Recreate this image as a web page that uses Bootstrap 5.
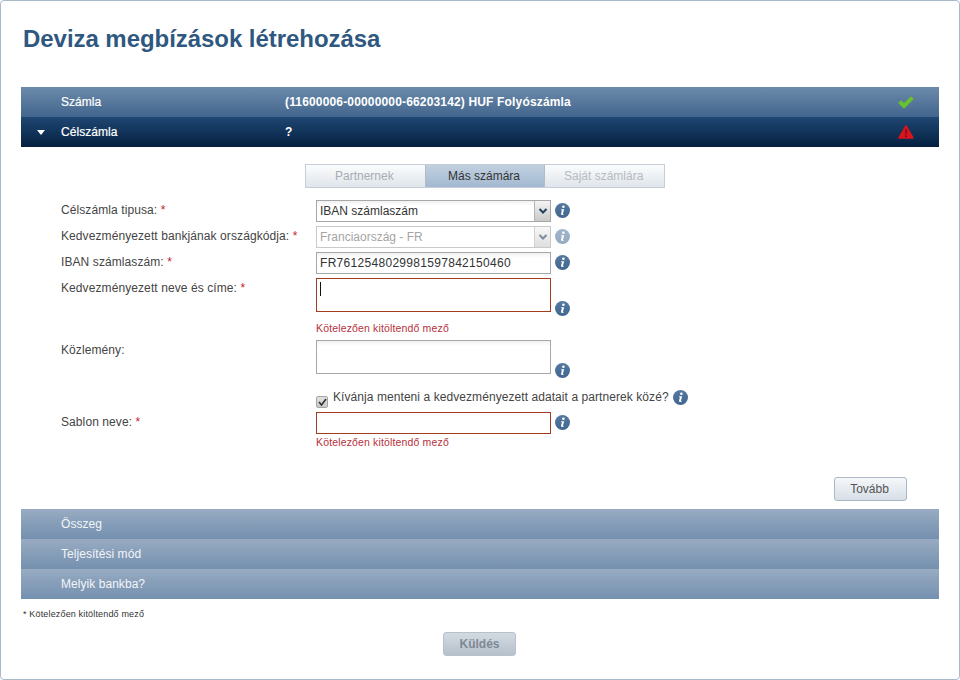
<!DOCTYPE html>
<html lang="hu">
<head>
<meta charset="utf-8">
<title>Deviza megbízások létrehozása</title>
<link href="https://cdn.jsdelivr.net/npm/bootstrap@5.3.0/dist/css/bootstrap.min.css" rel="stylesheet">
<style>
html,body{height:680px;overflow:hidden;background:#fff}
body{font-family:"Liberation Sans",Arial,sans-serif;font-size:12px;color:#444;line-height:14px}
.frame{height:680px;border:1px solid #a9b9cc;border-radius:4px;padding:0 20px;background:#fff}
.page-title{font-size:24px;line-height:28px;font-weight:700;color:#2f5880;margin:0;padding:24px 0 34px 2px;letter-spacing:-.05px}
.bar{height:30px;color:#fff;font-weight:400;display:flex;align-items:center;-webkit-text-stroke:.2px #fff;letter-spacing:.05px}
.bar-done{background:linear-gradient(#6c8bab,#42658d);}
.bar-open{background:linear-gradient(#1f4773,#04203f)}
.bar-later{background:linear-gradient(#98abc2,#7490af);color:#f2f5f8;-webkit-text-stroke:0}
.bar-caret{width:40px;display:flex;justify-content:center;padding-right:0}
.bar-name{width:224px}
.bar-value{flex:1;font-weight:700;-webkit-text-stroke:0;letter-spacing:.16px}
.bar-state{width:34px;display:flex;justify-content:center;margin-right:16px}
.tabs{width:360px;height:24px;margin:17px 0 12px 284px;display:flex;border:1px solid #c5ced8}
.tab-item{flex:1;display:flex;align-items:center;justify-content:center;padding-right:2px;color:#a9adb3;background:linear-gradient(#fbfcfd,#dfe5eb)}
.tab-item+.tab-item{border-left:1px solid #aebccb}
.tab-item.on{color:#333;background:linear-gradient(#c1d0e0,#a3b9d0)}
.tab-item.dim{color:#b7bbc0}
.form-row-x{display:flex;align-items:flex-start;margin-bottom:4px}
.lbl{width:255px;margin-left:40px;padding-top:3px;flex:none;color:#444;letter-spacing:.09px}
.req{color:#c8202c}
.fld{width:235px;height:22px;flex:none;border:1px solid #a7a7a7;background:linear-gradient(#f1f1f1,#fff 5px);padding:0 3px;font-size:12px;line-height:20px;color:#333;display:flex;align-items:center;justify-content:space-between}
.fld.dis{border-color:#c9c9c9;color:#a5a5a5;background:#fff}
.fld.tall{height:34px;align-items:flex-start}
.fld.bad{border-color:#a23c1e;background:#fff}
.mono-ish{letter-spacing:.3px}
.drop{width:16px;height:20px;margin-right:-3px;background:linear-gradient(#f4f4f4,#c9c9c9);border-left:1px solid #b5b5b5;display:flex;align-items:center;justify-content:center}
.dis .drop{opacity:.6}
.info{width:15px;height:15px;flex:none;margin-left:4px;margin-top:3px}
.info.low{margin-top:23px;margin-bottom:-4px}
.info.dim{opacity:.55}
.err{color:#b8303c;font-size:10.5px;line-height:12px;margin-left:295px;letter-spacing:.15px}
.err-a{margin-top:10px;margin-bottom:6px}
.err-b{margin-top:2px}
.caret-line{display:inline-block;width:1px;height:14px;background:#111;margin:3px 0 0 0}
.chk-row{margin:16px 0 4px 295px;display:flex;align-items:flex-start;height:18px;letter-spacing:.07px}
.box{width:12px;height:12px;border:1px solid #a5a5a5;border-radius:2px;background:linear-gradient(#e2e2e2,#c9c9c9);margin:6px 5px 0 0;flex:none;display:flex;align-items:center;justify-content:center}
.btn-x{width:73px;height:24px;border:1px solid #a9b7c6;border-radius:3px;background:linear-gradient(#f6f8fa,#d6dee6);color:#555;font-size:12px;padding:0 2px 0 0;line-height:22px;text-align:center}
.btn-x.off{background:linear-gradient(#d3dae1,#b6c1cc);color:#7e8893;font-weight:700;border-color:#b6c1cc;margin-right:1px;padding:0}
.next-wrap{display:flex;justify-content:flex-end;padding-right:32px;margin-top:29px;margin-bottom:8px}
.foot{font-size:9px;line-height:10px;color:#333;margin:10px 0 0 2px;letter-spacing:.16px}
.send-wrap{display:flex;justify-content:center;margin-top:13px}
</style>
</head>
<body>
<svg width="0" height="0" class="position-absolute">
<defs>
<linearGradient id="g-info" x1="0" y1="0" x2="0" y2="1"><stop offset="0" stop-color="#56799f"/><stop offset="1" stop-color="#3f6790"/></linearGradient>
<symbol id="i-info" viewBox="0 0 15 15">
<circle cx="7.5" cy="7.5" r="7.5" fill="url(#g-info)"/>
<circle cx="8.4" cy="3.8" r="1.3" fill="#fff"/>
<path d="M6.2 6.3h3l-1.3 4.4c-.1.4.3.4 1 .1l-.1.7c-1.3.6-3.1.6-2.8-.8l.9-3.4-.9-.2z" fill="#fff"/>
</symbol>
<symbol id="i-down" viewBox="0 0 10 8"><path d="M1.5 2 5 5.5 8.5 2" fill="none" stroke="#23405f" stroke-width="2"/></symbol>
</defs>
</svg>
<div class="frame">
<h1 class="page-title">Deviza megbízások létrehozása</h1>

<div class="bar bar-done">
<span class="bar-caret"></span><span class="bar-name">Számla</span>
<span class="bar-value">(11600006-00000000-66203142) HUF Folyószámla</span>
<span class="bar-state"><svg width="16" height="13" viewBox="0 0 16 13"><path d="M.5 7 3 4.5l3 2.8L13 .5 15.5 3 6 12.5z" fill="#68c22f" stroke="#68c22f" stroke-width=".5" stroke-linejoin="round"/></svg></span>
</div>
<div class="bar bar-open">
<span class="bar-caret"><svg width="8" height="5" viewBox="0 0 8 5"><path d="M0 0h8L4 5z" fill="#fff"/></svg></span><span class="bar-name">Célszámla</span>
<span class="bar-value">?</span>
<span class="bar-state"><svg width="16" height="14" viewBox="0 0 16 14"><path d="M8 1 15 13H1z" fill="#d8141f" stroke="#d8141f" stroke-width="1.6" stroke-linejoin="round"/><path d="M7.3 4.5h1.4l-.2 5h-1zM7.3 10.5h1.4v1.5H7.3z" fill="#5a0b10"/></svg></span>
</div>

<div class="tabs">
<div class="tab-item">Partnernek</div>
<div class="tab-item on">Más számára</div>
<div class="tab-item dim">Saját számlára</div>
</div>

<div class="form-row-x">
<div class="lbl">Célszámla tipusa: <span class="req">*</span></div>
<div class="fld"><span>IBAN számlaszám</span><span class="drop"><svg width="10" height="8"><use href="#i-down"/></svg></span></div>
<svg class="info"><use href="#i-info"/></svg>
</div>
<div class="form-row-x">
<div class="lbl">Kedvezményezett bankjának országkódja: <span class="req">*</span></div>
<div class="fld dis"><span>Franciaország - FR</span><span class="drop"><svg width="10" height="8"><use href="#i-down"/></svg></span></div>
<svg class="info dim"><use href="#i-info"/></svg>
</div>
<div class="form-row-x">
<div class="lbl">IBAN számlaszám: <span class="req">*</span></div>
<div class="fld"><span class="mono-ish">FR7612548029981597842150460</span></div>
<svg class="info"><use href="#i-info"/></svg>
</div>
<div class="form-row-x mb-0">
<div class="lbl">Kedvezményezett neve és címe: <span class="req">*</span></div>
<div class="fld tall bad"><span class="caret-line"></span></div>
<svg class="info low"><use href="#i-info"/></svg>
</div>
<div class="err err-a">Kötelezően kitöltendő mező</div>
<div class="form-row-x mb-0">
<div class="lbl">Közlemény:</div>
<div class="fld tall"></div>
<svg class="info low"><use href="#i-info"/></svg>
</div>
<div class="chk-row">
<span class="box"><svg width="9" height="8" viewBox="0 0 9 8"><path d="M1 4l2.5 3L8 1" fill="none" stroke="#333" stroke-width="1.6"/></svg></span>
<span>Kívánja menteni a kedvezményezett adatait a partnerek közé?</span>
<svg class="info mt-0"><use href="#i-info"/></svg>
</div>
<div class="form-row-x mb-0">
<div class="lbl">Sablon neve: <span class="req">*</span></div>
<div class="fld bad"></div>
<svg class="info"><use href="#i-info"/></svg>
</div>
<div class="err err-b">Kötelezően kitöltendő mező</div>

<div class="next-wrap"><button type="button" class="btn-x">Tovább</button></div>

<div class="bar bar-later"><span class="bar-caret"></span><span class="bar-name">Összeg</span></div>
<div class="bar bar-later"><span class="bar-caret"></span><span class="bar-name">Teljesítési mód</span></div>
<div class="bar bar-later"><span class="bar-caret"></span><span class="bar-name">Melyik bankba?</span></div>

<div class="foot">* Kötelezően kitöltendő mező</div>
<div class="send-wrap"><button type="button" class="btn-x off">Küldés</button></div>
</div>
<script src="https://cdn.jsdelivr.net/npm/bootstrap@5.3.0/dist/js/bootstrap.bundle.min.js"></script>
</body>
</html>
